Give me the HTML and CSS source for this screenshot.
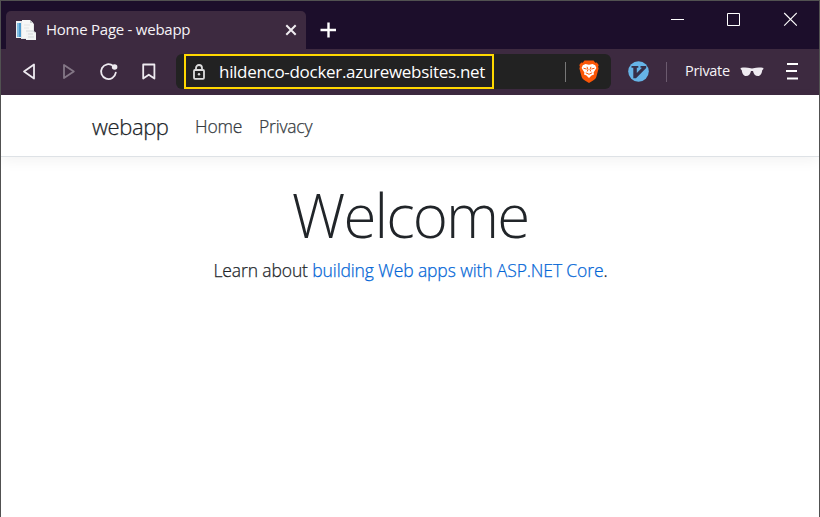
FILE: index.html
```html
<!DOCTYPE html>
<html lang="en">
<head>
<meta charset="utf-8">
<title>Home Page - webapp</title>
<link rel="stylesheet" href="styles.css">
</head>
<body>
<div class="window">
  <header class="titlebar">
    <div class="tab">
      <svg class="favicon" width="20" height="20" viewBox="0 0 20 20">
        <path d="M0 1h9v17H0z" fill="#eef1f3"/><path d="M1 3h4v14H1z" fill="#4c9bd0"/><path d="M1 3h2v14H1z" fill="#82bde1"/>
        <path d="M5 1h10l3 3v15H5z" fill="#e4e6e7"/><path d="M6 0h8l3 3v15H6z" fill="#f7f7f6"/><path d="M14 0v3h3z" fill="#c5c8ca"/>
        <path d="M8 5h6M8 8h5" stroke="#e3e5e6"/><path d="M10 11h7l3 2v7H10z" fill="#f3f4f4"/><path d="M10 11h7l3 2M12 14h5M12 17h6" stroke="#d3d7d9" fill="none"/>
      </svg>
      <span class="tab-title">Home Page - webapp</span>
      <svg class="tab-close" width="12" height="12" viewBox="0 0 12 12"><path d="M1.3 1.3l9.4 9.4M10.7 1.3l-9.4 9.4" stroke="#f0edf1" stroke-width="2"/></svg>
    </div>
    <svg class="new-tab" width="16" height="16" viewBox="0 0 16 16"><path d="M8.500.5v15M.5 8h15.500" stroke="#fff" stroke-width="2.400"/></svg>
    <div class="controls">
      <svg width="13" height="14" viewBox="0 0 13 14"><path d="M0 7.500h13" stroke="#fff"/></svg>
      <svg width="13" height="14" viewBox="0 0 13 14"><path d="M.5 1.500h12v12H.5z" fill="none" stroke="#fff"/></svg>
      <svg width="14" height="14" viewBox="0 0 14 14"><path d="M1.200 1l12.600 12.600M13.800 1L1.200 13.600" stroke="#fff" stroke-width="1.100"/></svg>
    </div>
  </header>
  <div class="toolbar">
    <div class="nav-buttons">
      <svg width="20" height="20" viewBox="0 0 20 20"><path d="M15 2.500v14L5 9.500z" class="line"/></svg>
      <svg class="disabled" width="20" height="20" viewBox="0 0 20 20"><path d="M5 3v13l9.800-6.500z" class="line"/></svg>
      <svg width="20" height="20" viewBox="0 0 20 20"><path d="M14.200 3.900A7.400 7.400 0 1 0 16.800 10.700" class="line"/><circle cx="15.600" cy="5" r="2.800" fill="#eeeaf0"/></svg>
      <svg width="20" height="20" viewBox="0 0 20 20"><path d="M4.200 2.500h11.200v14L9.800 12.700 4.200 16.500z" class="line"/></svg>
    </div>
    <div class="address">
      <div class="highlight">
        <svg width="12" height="16" viewBox="0 0 12 16"><path d="M3 6V4a3 3 0 0 1 6 0v2" class="line lock"/><rect x="1" y="6" width="10" height="8.800" rx="1" class="line lock"/><circle cx="6" cy="10.300" r="1.200" fill="#ddd"/></svg>
        <span class="url">hildenco-docker.azurewebsites.net</span>
      </div>
      <i class="divider light"></i>
      <svg class="brave" width="20" height="23" viewBox="0 0 20 23">
        <path d="M5.500.5h9L16.300 2.700l1.500-.2L19.700 5l-.6 1.800.5 1.700-2.300 8.500c-.4 1.600-1.800 2.600-3.200 3.600L10 23l-4.100-2.400c-1.400-1-2.800-2-3.200-3.600L.4 8.500l.5-1.700L.3 5l1.900-2.500 1.500.2z" fill="#fb5607"/>
        <path d="M6.500 4l3.500.7 3.500-.7 2.700 1.300 1.200 2.700-2.800 4.500.4 2-2.500 1-2.500 2.500L7.500 15.500 5 14.500l.4-2L2.600 8l1.200-2.700z" fill="#fff"/>
        <path d="M4.500 8.200l3.200.9M15.500 8.200l-3.200.9M8 6.800l1 2.700-.8 2M12 6.800l-1 2.700.8 2M6.800 12.800l3.200 1.500 3.200-1.500" fill="none" stroke="#fb5607" stroke-width="1"/>
      </svg>
    </div>
    <svg class="vim" width="21" height="21" viewBox="0 0 21 21"><circle cx="10.500" cy="10.500" r="10.300" fill="#66b4e7"/><path d="M3.500 5h6.800v1.800H8.800v5.200l5.200-5.200h-1.500V5h5.700v2L8 17.200H5.300V6.800H3.500z" fill="#36304a"/></svg>
    <i class="divider"></i>
    <span class="private">Private</span>
    <svg class="glasses" width="24" height="10" viewBox="0 0 24 10"><path d="M.5 1c3.700-.6 7-.5 10.200.3q1.300.2 2.600 0C16.500.5 19.800.4 23.500 1l-.4 1.500-.8.500C21.800 6.600 20.500 9 18 9c-2.800 0-4.400-2-5-5h-2c-.6 3-2.200 5-5 5-2.500 0-3.800-2.400-4.300-6l-.8-.5z" fill="#eeeaf0"/></svg>
    <svg class="menu" width="12" height="17" viewBox="0 0 12 17"><path d="M1 1h11M0 8h11M1 15.500h11" stroke="#fff" stroke-width="2"/></svg>
  </div>
  <nav class="navbar">
    <a class="brand">webapp</a>
    <a class="home">Home</a>
    <a class="privacy">Privacy</a>
  </nav>
  <main class="content">
    <h1>Welcome</h1>
    <p>Learn about <a>building Web apps with ASP.NET Core</a>.</p>
  </main>
</div>
</body>
</html>
```

FILE: styles.css
```css
* { box-sizing: border-box; }
body { margin: 0; font-family: "Open Sans", "Noto Sans", sans-serif; color: #212529; background: #fff; }
svg { display: block; flex: none; }
.window { height: 517px; border: 1px solid #515151; border-bottom: 0; overflow: hidden; }
.titlebar { height: 48px; background: #1c0e2b; display: flex; align-items: flex-start; }
.tab { width: 300px; height: 38px; margin: 10px 0 0 5px; padding: 0 9px 2px 10px; background: #3d2a40; border-radius: 5px 5px 0 0; display: flex; align-items: center; }
.favicon { margin: 2px 10px 0 0; }
.tab-title { font-size: 15px; letter-spacing: -.25px; color: #f5f2f6; white-space: nowrap; }
.tab-close { margin: 2px 0 0 auto; }
.new-tab { margin: 21px 0 0 14px; }
.controls { margin: 11px 22px 0 auto; display: flex; gap: 43px; }
.toolbar { height: 46px; padding-bottom: 1px; background: #3d2a40; display: flex; align-items: center; }
.nav-buttons { display: flex; gap: 20px; margin-left: 18px; }
.line { fill: none; stroke: #eeeaf0; stroke-width: 1.8; stroke-linejoin: round; stroke-linecap: round; }
.lock { stroke: #ddd; }
.disabled { opacity: .4; }
.address { width: 435px; height: 35px; margin-left: 17px; padding: 0 12px 0 8px; background: #222; border-radius: 6px; display: flex; align-items: center; }
.highlight { width: 310px; height: 35px; border: 2px solid #ffd800; padding-left: 7px; display: flex; align-items: center; }
.url { margin-left: 14px; font-size: 17px; letter-spacing: -.3px; color: #fff; white-space: nowrap; }
.divider { width: 1px; height: 20px; background: #6b5a6e; }
.divider.light { background: #777; margin-left: auto; margin-right: 13px; }
.vim { margin: 0 17px; }
.private { width: 45px; margin: 0 10px 2px 18px; font-size: 14.500px; letter-spacing: -.3px; color: #f5f2f6; white-space: nowrap; }
.menu { margin-left: 22px; }
.navbar { height: 62px; padding: 0 0 0 91px; display: flex; align-items: center; border-bottom: 1px solid #dee2e6; box-shadow: 0 4px 13px rgba(0, 0, 0, .05); font-weight: 300; -webkit-text-stroke: .25px currentColor; white-space: nowrap; }
.brand { width: 103px; padding-top: 1px; font-size: 22px; letter-spacing: -.4px; }
.home, .privacy { font-size: 17.500px; letter-spacing: -.2px; color: #343a40; }
.home { width: 64px; }
.content { padding-top: 21px; text-align: center; }
h1 { margin: 0; font-size: 60px; line-height: 74px; font-weight: 300; letter-spacing: -1.900px; }
p { margin: 5px 0 0; padding-left: 1px; font-size: 17.500px; line-height: 26px; font-weight: 300; letter-spacing: -.12px; -webkit-text-stroke: .25px currentColor; white-space: nowrap; }
p a { color: #0366d6; }
```
